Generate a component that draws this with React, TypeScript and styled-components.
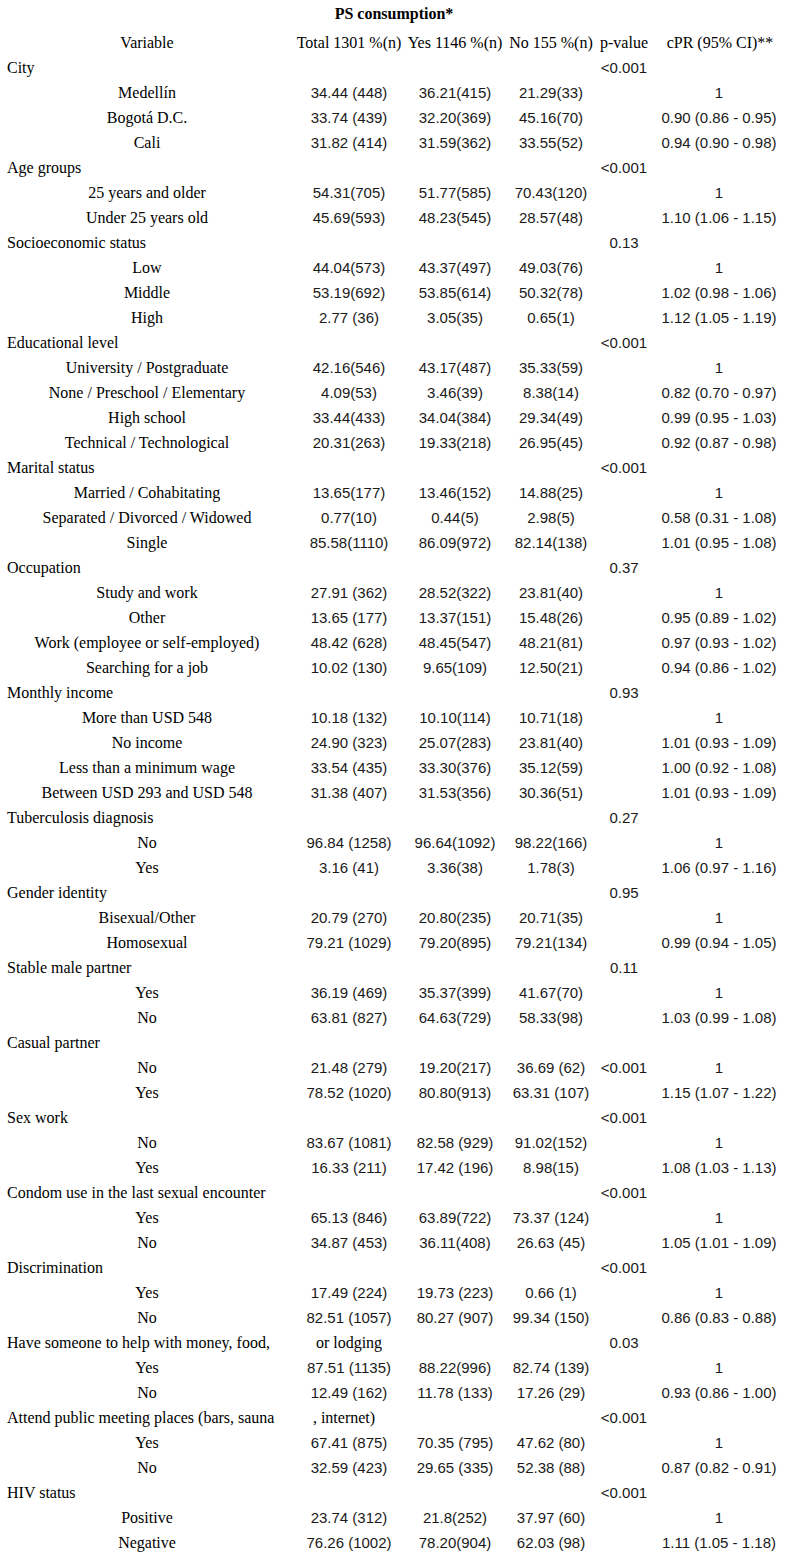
import * as React from 'react'
import styled, {createGlobalStyle} from 'styled-components'

const GlobalStyle = createGlobalStyle`
  body {
    margin: 0;
    background: #ffffff;
    color: #000000;
    font-family: "Liberation Serif", "Times New Roman", serif;
  }
`

const COLS = '294px 110px 102px 90px 56px 136px'

const Table = styled.div`
  width: 788px;
  display: flex;
  flex-direction: column;
  font-size: 16px;
`

const Title = styled.div`
  height: 30px;
  line-height: 28px;
  text-align: center;
  font-weight: bold;
`

const Row = styled.div`
  display: grid;
  grid-template-columns: ${COLS};
  height: 25px;
  line-height: 25px;
  white-space: nowrap;
`

const Label = styled.div<{$group?: boolean}>`
  padding-left: ${p => (p.$group ? '7px' : '0')};
  text-align: ${p => (p.$group ? 'left' : 'center')};
`

const Head = styled.div`
  text-align: center;
`

const Num = styled.div<{$shift?: number}>`
  text-align: center;
  font-family: "Liberation Sans", Arial, sans-serif;
  font-size: 15px;
  color: #1a1a1a;
  padding-right: ${p => p.$shift || 0}px;
`

const Extra = styled.div<{$shift?: number}>`
  text-align: center;
  padding-right: ${p => p.$shift || 0}px;
`

type Item = [string, string, string, string, string, string]
type Group = {name: string; extra?: string; extraShift?: number; p?: string; items: Item[]}

const groups: Group[] = [
  {name: 'City', p: '<0.001', items: [
    ['Medellín', '34.44 (448)', '36.21(415)', '21.29(33)', '', '1'],
    ['Bogotá D.C.', '33.74 (439)', '32.20(369)', '45.16(70)', '', '0.90 (0.86 - 0.95)'],
    ['Cali', '31.82 (414)', '31.59(362)', '33.55(52)', '', '0.94 (0.90 - 0.98)'],
  ]},
  {name: 'Age groups', p: '<0.001', items: [
    ['25 years and older', '54.31(705)', '51.77(585)', '70.43(120)', '', '1'],
    ['Under 25 years old', '45.69(593)', '48.23(545)', '28.57(48)', '', '1.10 (1.06 - 1.15)'],
  ]},
  {name: 'Socioeconomic status', p: '0.13', items: [
    ['Low', '44.04(573)', '43.37(497)', '49.03(76)', '', '1'],
    ['Middle', '53.19(692)', '53.85(614)', '50.32(78)', '', '1.02 (0.98 - 1.06)'],
    ['High', '2.77 (36)', '3.05(35)', '0.65(1)', '', '1.12 (1.05 - 1.19)'],
  ]},
  {name: 'Educational level', p: '<0.001', items: [
    ['University / Postgraduate', '42.16(546)', '43.17(487)', '35.33(59)', '', '1'],
    ['None / Preschool / Elementary', '4.09(53)', '3.46(39)', '8.38(14)', '', '0.82 (0.70 - 0.97)'],
    ['High school', '33.44(433)', '34.04(384)', '29.34(49)', '', '0.99 (0.95 - 1.03)'],
    ['Technical / Technological', '20.31(263)', '19.33(218)', '26.95(45)', '', '0.92 (0.87 - 0.98)'],
  ]},
  {name: 'Marital status', p: '<0.001', items: [
    ['Married / Cohabitating', '13.65(177)', '13.46(152)', '14.88(25)', '', '1'],
    ['Separated / Divorced / Widowed', '0.77(10)', '0.44(5)', '2.98(5)', '', '0.58 (0.31 - 1.08)'],
    ['Single', '85.58(1110)', '86.09(972)', '82.14(138)', '', '1.01 (0.95 - 1.08)'],
  ]},
  {name: 'Occupation', p: '0.37', items: [
    ['Study and work', '27.91 (362)', '28.52(322)', '23.81(40)', '', '1'],
    ['Other', '13.65 (177)', '13.37(151)', '15.48(26)', '', '0.95 (0.89 - 1.02)'],
    ['Work (employee or self-employed)', '48.42 (628)', '48.45(547)', '48.21(81)', '', '0.97 (0.93 - 1.02)'],
    ['Searching for a job', '10.02 (130)', '9.65(109)', '12.50(21)', '', '0.94 (0.86 - 1.02)'],
  ]},
  {name: 'Monthly income', p: '0.93', items: [
    ['More than USD 548', '10.18 (132)', '10.10(114)', '10.71(18)', '', '1'],
    ['No income', '24.90 (323)', '25.07(283)', '23.81(40)', '', '1.01 (0.93 - 1.09)'],
    ['Less than a minimum wage', '33.54 (435)', '33.30(376)', '35.12(59)', '', '1.00 (0.92 - 1.08)'],
    ['Between USD 293 and USD 548', '31.38 (407)', '31.53(356)', '30.36(51)', '', '1.01 (0.93 - 1.09)'],
  ]},
  {name: 'Tuberculosis diagnosis', p: '0.27', items: [
    ['No', '96.84 (1258)', '96.64(1092)', '98.22(166)', '', '1'],
    ['Yes', '3.16 (41)', '3.36(38)', '1.78(3)', '', '1.06 (0.97 - 1.16)'],
  ]},
  {name: 'Gender identity', p: '0.95', items: [
    ['Bisexual/Other', '20.79 (270)', '20.80(235)', '20.71(35)', '', '1'],
    ['Homosexual', '79.21 (1029)', '79.20(895)', '79.21(134)', '', '0.99 (0.94 - 1.05)'],
  ]},
  {name: 'Stable male partner', p: '0.11', items: [
    ['Yes', '36.19 (469)', '35.37(399)', '41.67(70)', '', '1'],
    ['No', '63.81 (827)', '64.63(729)', '58.33(98)', '', '1.03 (0.99 - 1.08)'],
  ]},
  {name: 'Casual partner', items: [
    ['No', '21.48 (279)', '19.20(217)', '36.69 (62)', '<0.001', '1'],
    ['Yes', '78.52 (1020)', '80.80(913)', '63.31 (107)', '', '1.15 (1.07 - 1.22)'],
  ]},
  {name: 'Sex work', p: '<0.001', items: [
    ['No', '83.67 (1081)', '82.58 (929)', '91.02(152)', '', '1'],
    ['Yes', '16.33 (211)', '17.42 (196)', '8.98(15)', '', '1.08 (1.03 - 1.13)'],
  ]},
  {name: 'Condom use in the last sexual encounter', p: '<0.001', items: [
    ['Yes', '65.13 (846)', '63.89(722)', '73.37 (124)', '', '1'],
    ['No', '34.87 (453)', '36.11(408)', '26.63 (45)', '', '1.05 (1.01 - 1.09)'],
  ]},
  {name: 'Discrimination', p: '<0.001', items: [
    ['Yes', '17.49 (224)', '19.73 (223)', '0.66 (1)', '', '1'],
    ['No', '82.51 (1057)', '80.27 (907)', '99.34 (150)', '', '0.86 (0.83 - 0.88)'],
  ]},
  {name: 'Have someone to help with money, food,', extra: 'or lodging', p: '0.03', items: [
    ['Yes', '87.51 (1135)', '88.22(996)', '82.74 (139)', '', '1'],
    ['No', '12.49 (162)', '11.78 (133)', '17.26 (29)', '', '0.93 (0.86 - 1.00)'],
  ]},
  {name: 'Attend public meeting places (bars, sauna', extra: ', internet)', extraShift: 10, p: '<0.001', items: [
    ['Yes', '67.41 (875)', '70.35 (795)', '47.62 (80)', '', '1'],
    ['No', '32.59 (423)', '29.65 (335)', '52.38 (88)', '', '0.87 (0.82 - 0.91)'],
  ]},
  {name: 'HIV status', p: '<0.001', items: [
    ['Positive', '23.74 (312)', '21.8(252)', '37.97 (60)', '', '1'],
    ['Negative', '76.26 (1002)', '78.20(904)', '62.03 (98)', '', '1.11 (1.05 - 1.18)'],
  ]},
]

const App = () => {
  return (
    <>
      <GlobalStyle />
      <Table>
        <Title>PS consumption*</Title>
        <Row>
          <Head>Variable</Head>
          <Head>Total 1301 %(n)</Head>
          <Head>Yes 1146 %(n)</Head>
          <Head>No 155 %(n)</Head>
          <Head>p-value</Head>
          <Head>cPR (95% CI)**</Head>
        </Row>
        {groups.map(g => (
          <React.Fragment key={g.name}>
            <Row>
              <Label $group>{g.name}</Label>
              {g.extra ? <Extra $shift={g.extraShift}>{g.extra}</Extra> : <div />}
              <div />
              <div />
              <Num>{g.p || ''}</Num>
              <div />
            </Row>
            {g.items.map((it, i) => (
              <Row key={i}>
                <Label>{it[0]}</Label>
                <Num>{it[1]}</Num>
                <Num>{it[2]}</Num>
                <Num>{it[3]}</Num>
                <Num>{it[4]}</Num>
                <Num $shift={2}>{it[5]}</Num>
              </Row>
            ))}
          </React.Fragment>
        ))}
      </Table>
    </>
  )
}

export default App
